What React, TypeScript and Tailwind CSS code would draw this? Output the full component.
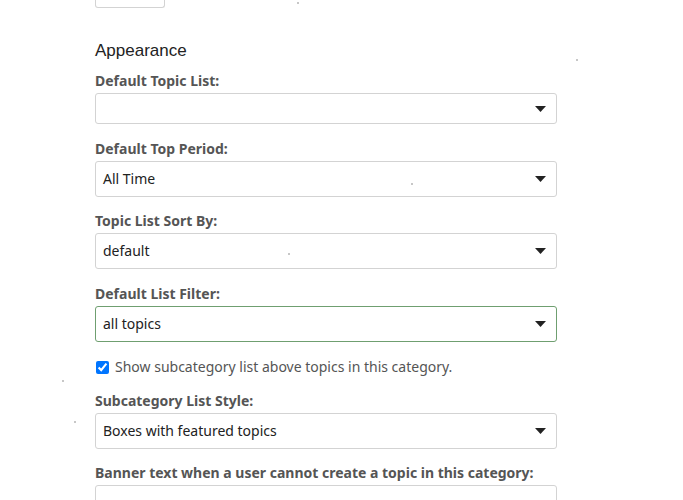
import React from "react";

function Caret() {
  return (
    <svg width="11" height="6" viewBox="0 0 11 6" className="shrink-0">
      <path d="M0 0 H11 L5.5 6 Z" fill="#222" />
    </svg>
  );
}

function Label({ children }: { children: React.ReactNode }) {
  return <div className="pt-[1px] text-[14px] leading-[20px] font-bold text-[#555] mb-[2px]">{children}</div>;
}

function Select({ value, h = "h-[36px]", green = false }: { value?: string; h?: string; green?: boolean }) {
  return (
    <div
      className={`${h} w-[462px] flex items-center justify-between pl-[7px] pr-[10px] bg-white rounded-[3px] border ${
        green ? "border-[#6f9f70]" : "border-[#d3d3d3]"
      }`}
    >
      <span className="text-[14px] leading-[20px] text-[#222]">{value ?? ""}</span>
      <Caret />
    </div>
  );
}

const dots: [number, number][] = [
  [297, 2],
  [576, 59],
  [411, 183],
  [288, 253],
  [62, 380],
  [74, 421],
];

export default function App() {
  return (
    <div className="relative w-[683px] h-[500px] overflow-hidden bg-white font-['Noto_Sans',sans-serif]">
      <div className="pl-[95px]">
        <div className="w-[70px] h-[8px] border border-t-0 border-[#d3d3d3] rounded-b-[3px]" />
        <h3 className="mt-[33px] text-[17px] leading-[20px] font-['Liberation_Sans',Arial,sans-serif] text-[#222]">
          Appearance
        </h3>
        <div className="mt-[9px]">
          <Label>Default Topic List:</Label>
          <Select h="h-[31px]" />
        </div>
        <div className="mt-[14px]">
          <Label>Default Top Period:</Label>
          <Select value="All Time" />
        </div>
        <div className="mt-[13px]">
          <Label>Topic List Sort By:</Label>
          <Select value="default" />
        </div>
        <div className="mt-[14px]">
          <Label>Default List Filter:</Label>
          <Select value="all topics" green />
        </div>
        <label className="mt-[15px] flex items-center h-[20px]">
          <input
            type="checkbox"
            defaultChecked
            className="m-0 ml-[1px] w-[13px] h-[13px] accent-[#0075ff]"
          />
          <span className="ml-[6px] text-[14px] leading-[20px] text-[#555]">
            Show subcategory list above topics in this category.
          </span>
        </label>
        <div className="mt-[13px]">
          <Label>Subcategory List Style:</Label>
          <Select value="Boxes with featured topics" />
        </div>
        <div className="mt-[13px]">
          <Label>Banner text when a user cannot create a topic in this category:</Label>
          <div className="h-[36px] w-[462px] bg-white rounded-[3px] border border-[#d3d3d3]" />
        </div>
      </div>
      {dots.map(([x, y]) => (
        <span
          key={`${x}-${y}`}
          className="absolute w-[2px] h-[2px] rounded-full bg-[#b5b5b5]"
          style={{ left: x, top: y }}
        />
      ))}
    </div>
  );
}
